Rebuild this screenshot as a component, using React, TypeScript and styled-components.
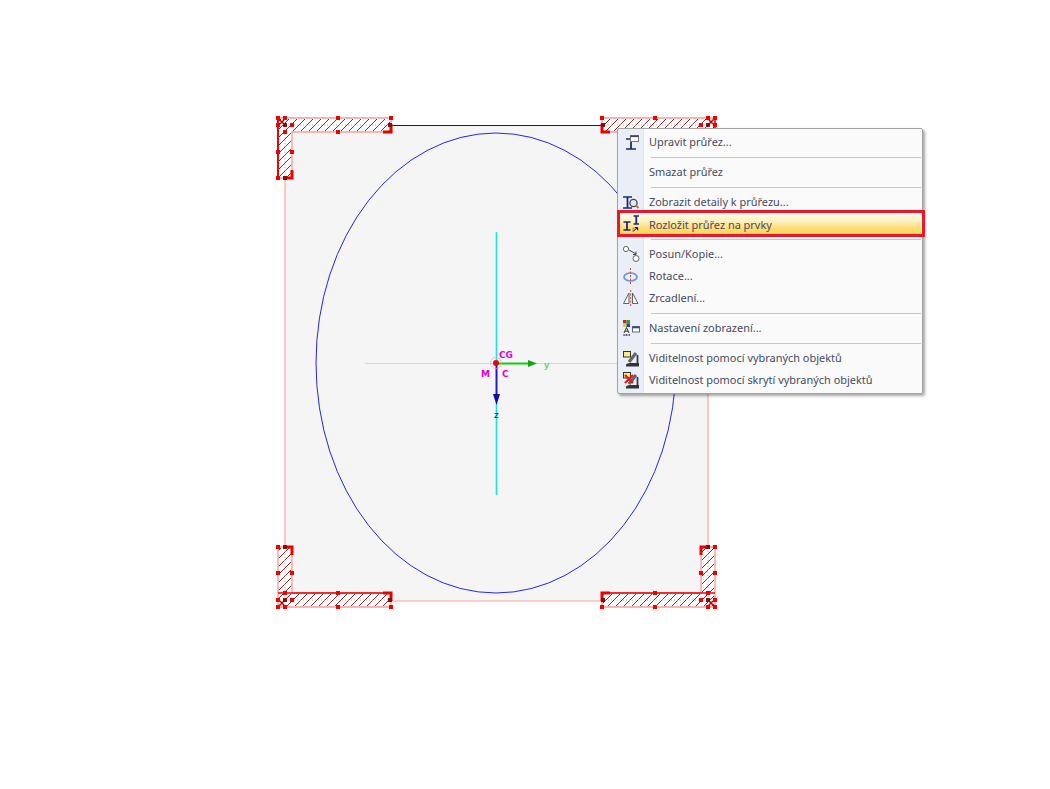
import React from "react";
import styled, { createGlobalStyle } from "styled-components";

const Global = createGlobalStyle`
  html, body { margin: 0; padding: 0; background: #fff; }
  #root { width: 1050px; height: 789px; overflow: hidden; }
`;

const Page = styled.main`
  position: relative;
  width: 1050px;
  height: 789px;
  background: #fff;
`;

const Canvas = styled.svg`
  display: block;
  width: 1050px;
  height: 789px;
`;

const Label = styled.text<{ $color: string; $bold?: boolean }>`
  font-family: "DejaVu Sans", "Liberation Sans", sans-serif;
  font-size: 9px;
  font-weight: ${(p) => (p.$bold ? 700 : 400)};
  fill: ${(p) => p.$color};
`;

const Menu = styled.nav`
  position: absolute;
  left: 617px;
  top: 128px;
  width: 306px;
  height: 266px;
  box-sizing: border-box;
  padding: 2px 1px;
  display: flex;
  flex-direction: column;
  border: 1px solid #a3a3a3;
  border-radius: 2px;
  box-shadow: 2px 2px 3px rgba(0, 0, 0, 0.35);
  background: linear-gradient(to right, #e9eef7 25px, #dfe4ec 25px, #dfe4ec 26px, #fafafa 26px);
`;

const Row = styled.div<{ $active?: boolean }>`
  position: relative;
  display: flex;
  align-items: center;
  height: 22px;
  flex: none;
  color: #474b5e;
  ${(p) =>
    p.$active &&
    `background: linear-gradient(to bottom, #fffdf0 0%, #fdf2c4 35%, #fedf7c 65%, #fdd24a 100%);`}
`;

const IconCell = styled.span`
  width: 20px;
  height: 20px;
  margin-left: 3px;
  margin-right: 7px;
  flex: none;
  display: flex;
`;

const RowText = styled.span<{ $active?: boolean }>`
  font-family: "Noto Sans", "Open Sans", sans-serif;
  font-size: 10.95px;
  white-space: nowrap;
  padding-bottom: ${(p) => (p.$active ? 0 : 2)}px;
`;

const Marker = styled.span`
  position: absolute;
  left: -2px;
  right: -4px;
  top: -3px;
  bottom: -2px;
  border: 3px solid #e8192f;
  pointer-events: none;
`;

const Separator = styled.div`
  height: 8px;
  flex: none;
  display: flex;
  align-items: center;
  padding-left: 32px;
  &::after {
    content: "";
    flex: 1;
    height: 1px;
    background: #c6c6c6;
  }
`;

const NAVY = "#1b2a78";

const Beam = ({ x, y, w, h }: { x: number; y: number; w: number; h: number }) => (
  <g stroke={NAVY} fill="none">
    <path d={`M${x} ${y}h${w}M${x} ${y + h}h${w}`} strokeWidth={1.6} />
    <path d={`M${x + w / 2} ${y}v${h}`} strokeWidth={1.8} />
  </g>
);

const Glyph = ({ children }: { children: React.ReactNode }) => (
  <svg width="20" height="20" viewBox="0 0 20 20">
    {children}
  </svg>
);

const Scope = () => (
  <g>
    <path d="M7 14 L14 5" stroke="#666" strokeWidth={3.2} />
    <path d="M15.5 7 V15" fill="none" stroke="#3c3c3c" strokeWidth={1.8} />
    <path d="M4 18.5 V16.5 Q5 15 8 15 H17 V18.5Z" fill="#333" />
  </g>
);

const icons: Record<string, React.ReactNode> = {
  edit: (
    <Glyph>
      <Beam x={4} y={7} w={10} h={10} />
      <rect x={8.5} y={3.5} width={8} height={6} fill="#fff" stroke="#777" />
      <rect x={8.5} y={3.5} width={8} height={1.6} fill="#445" />
    </Glyph>
  ),
  detail: (
    <Glyph>
      <Beam x={1} y={5} w={9} h={11} />
      <circle cx={11.5} cy={11} r={3.6} fill="#dfe8f5" stroke="#445" strokeWidth={1.3} />
      <path d="M14 13.5 L16.5 16" stroke="#b9772a" strokeWidth={2} />
    </Glyph>
  ),
  split: (
    <Glyph>
      <Beam x={1.5} y={8} w={7} h={8} />
      <Beam x={11.5} y={2} w={5.5} h={8} />
      <path d="M11 17.5 V14 H16 V17" fill="none" stroke="#222" strokeWidth={0.8} strokeDasharray="1 1" />
      <path d="M11.5 17 L15 14M13 13.5 H15.5 V16" fill="none" stroke="#111" strokeWidth={1} />
    </Glyph>
  ),
  move: (
    <Glyph>
      <circle cx={4} cy={5} r={2.6} fill="#fff" stroke="#666" />
      <path d="M7 6 L14 10M14 7.5 V10.5 H11" fill="none" stroke="#444" />
      <circle cx={14} cy={14.5} r={3} fill="#fff" stroke="#666" />
    </Glyph>
  ),
  rotate: (
    <Glyph>
      <ellipse cx={8.5} cy={11} rx={6.5} ry={4} fill="none" stroke="#6c9bd6" strokeWidth={1.7} />
      <path d="M8.5 2 V18" stroke="#d01818" strokeWidth={0.8} strokeDasharray="2 1.5" />
    </Glyph>
  ),
  mirror: (
    <Glyph>
      <path d="M7 5 V15.5 H1.5Z" fill="#f8f8f8" stroke="#555" strokeWidth={0.9} />
      <path d="M10.5 5 V15.5 H16Z" fill="#f8f8f8" stroke="#555" strokeWidth={0.9} />
      <path d="M8.7 2 V18" stroke="#d01818" strokeWidth={0.8} strokeDasharray="2 1.5" />
    </Glyph>
  ),
  display: (
    <Glyph>
      <rect x={1} y={2} width={3.5} height={3.5} fill="#d42020" />
      <rect x={4.5} y={2} width={3.5} height={3.5} fill="#2aa22a" />
      <rect x={1} y={5.5} width={3.5} height={3.5} fill="#e8d020" />
      <rect x={4.5} y={5.5} width={3.5} height={3.5} fill="#2a40c0" />
      <path d="M2 15 L4.5 9.5 L7 15M3 13.2 H6" fill="none" stroke="#333" />
      <path d="M1.5 17 H8M2 16 V18M4.5 16 V18M7.5 16 V18" stroke="#444" strokeWidth={0.8} />
      <rect x={10.5} y={8.5} width={7} height={5.5} fill="#fff" stroke="#667" />
      <rect x={10.5} y={8.5} width={7} height={1.8} fill="#2a4aa8" />
    </Glyph>
  ),
  visible: (
    <Glyph>
      <Scope />
      <rect x={1.5} y={3.5} width={7} height={5.5} fill="#fbee80" stroke="#333" />
    </Glyph>
  ),
  hidden: (
    <Glyph>
      <Scope />
      <rect x={1.5} y={2.5} width={7} height={5.5} fill="#fbee80" stroke="#333" />
      <path d="M3 5 L11 13M11 5 L3 13" stroke="#e01a1a" strokeWidth={2.2} />
    </Glyph>
  ),
};

type Entry = { label?: string; icon?: string; active?: boolean };

const entries: Entry[] = [
  { label: "Upravit průřez...", icon: "edit" },
  {},
  { label: "Smazat průřez" },
  {},
  { label: "Zobrazit detaily k průřezu...", icon: "detail" },
  { label: "Rozložit průřez na prvky", icon: "split", active: true },
  {},
  { label: "Posun/Kopie...", icon: "move" },
  { label: "Rotace...", icon: "rotate" },
  { label: "Zrcadlení...", icon: "mirror" },
  {},
  { label: "Nastavení zobrazení...", icon: "display" },
  {},
  { label: "Viditelnost pomocí vybraných objektů", icon: "visible" },
  { label: "Viditelnost pomocí skrytí vybraných objektů", icon: "hidden" },
];

const Handle = ({ x, y, dark }: { x: number; y: number; dark?: boolean }) => (
  <rect x={x - 2} y={y - 2} width={4} height={4} fill={dark ? "#8a0c0c" : "#f00000"} />
);

const handles: [number, number, boolean?][] = [
  [278, 118], [285, 118], [338, 118], [391, 118],
  [278, 125], [285, 125, true], [292, 125], [390, 125, true],
  [285, 132], [338, 132], [278, 152], [292, 152], [278, 178], [285, 178, true],
];

const CORNER_BAND = "M278 118H391V132H292V178H278Z";

const Corner = ({ transform, solid, id }: { transform?: string; solid: string; id: string }) => (
  <g transform={transform}>
    <path d={CORNER_BAND} fill={`url(#${id})`} stroke="#f7b6b6" strokeWidth={1.8} />
    <path d="M285 125H390M285 125V178" stroke="#bbb" strokeDasharray="1 2" fill="none" />
    <path d={solid} fill="none" stroke="#ee0000" strokeWidth={1.4} />
    <path d="M292 170V178H285M391 124V132H383" fill="none" stroke="#ee0000" strokeWidth={3} />
    <path d="M279 119L285 125M284 120L280 124" stroke="#c00000" strokeWidth={1.5} />
    {handles.map(([x, y, dark]) => (
      <Handle key={`${x}-${y}`} x={x} y={y} dark={dark} />
    ))}
  </g>
);

const patternFlips = [undefined, "scale(-1 1)", "scale(1 -1)", "scale(-1 -1)"];

const App = () => (
  <Page>
    <Global />
    <Canvas viewBox="0 0 1050 789">
      <defs>
        {["h1", "h2", "h3", "h4"].map((id, i) => (
          <pattern
            key={id}
            id={id}
            width="8"
            height="8"
            patternUnits="userSpaceOnUse"
            patternTransform={patternFlips[i]}
          >
            <rect width="8" height="8" fill="#fff" />
            <path d="M-1 9 L9 -1" stroke="#8c1010" strokeWidth={0.9} />
          </pattern>
        ))}
      </defs>

      <rect x={285} y={125} width={423} height={476} fill="#f5f5f5" />
      <path d="M285 178V547M708 178V547M391 601H602" stroke="#fba6a6" fill="none" strokeWidth={1.2} />
      <path d="M391 125.5H602" stroke="#222" strokeWidth={1} />
      <ellipse cx={496} cy={363} rx={180} ry={230} fill="none" stroke="#2525ee" strokeWidth={1} />

      <path d="M365 363.5H620" stroke="#96f2f2" />
      <path d="M496.5 232V495" stroke="#1ce2e2" strokeWidth={1.6} />

      <Corner id="h1" solid="M278 118V178" />
      <Corner id="h2" solid="M715 118V178" transform="translate(993 0) scale(-1 1)" />
      <Corner id="h3" solid="M278 607V547M278 132H391" transform="translate(0 725) scale(1 -1)" />
      <Corner id="h4" solid="M278 607V547M278 132H391" transform="translate(993 725) scale(-1 -1)" />

      <path d="M496 363.5H530" stroke="#18c818" strokeWidth={1.8} />
      <path d="M528 360L537 363.5L528 367Z" fill="#10a810" />
      <path d="M496.5 363V398" stroke="#1818d8" strokeWidth={1.8} />
      <path d="M493 394L496.5 405L500 394Z" fill="#1010a0" />
      <circle cx={496} cy={363} r={5.5} fill="none" stroke="#f090c0" strokeDasharray="1.5 1" />
      <circle cx={496} cy={363} r={3} fill="#d80c0c" />

      <Label x={499} y={358} $color="#e000d0" $bold>CG</Label>
      <Label x={481} y={377} $color="#e000d0" $bold>M</Label>
      <Label x={502} y={377} $color="#e000d0" $bold>C</Label>
      <Label x={544} y={368} $color="#2ec82e">y</Label>
      <Label x={494} y={418} $color="#1010d8">z</Label>
    </Canvas>

    <Menu>
      {entries.map((e, i) =>
        e.label ? (
          <Row key={i} $active={e.active}>
            <IconCell>{e.icon ? icons[e.icon] : null}</IconCell>
            <RowText $active={e.active}>{e.label}</RowText>
            {e.active ? <Marker /> : null}
          </Row>
        ) : (
          <Separator key={i} />
        )
      )}
    </Menu>
  </Page>
);

export default App;
